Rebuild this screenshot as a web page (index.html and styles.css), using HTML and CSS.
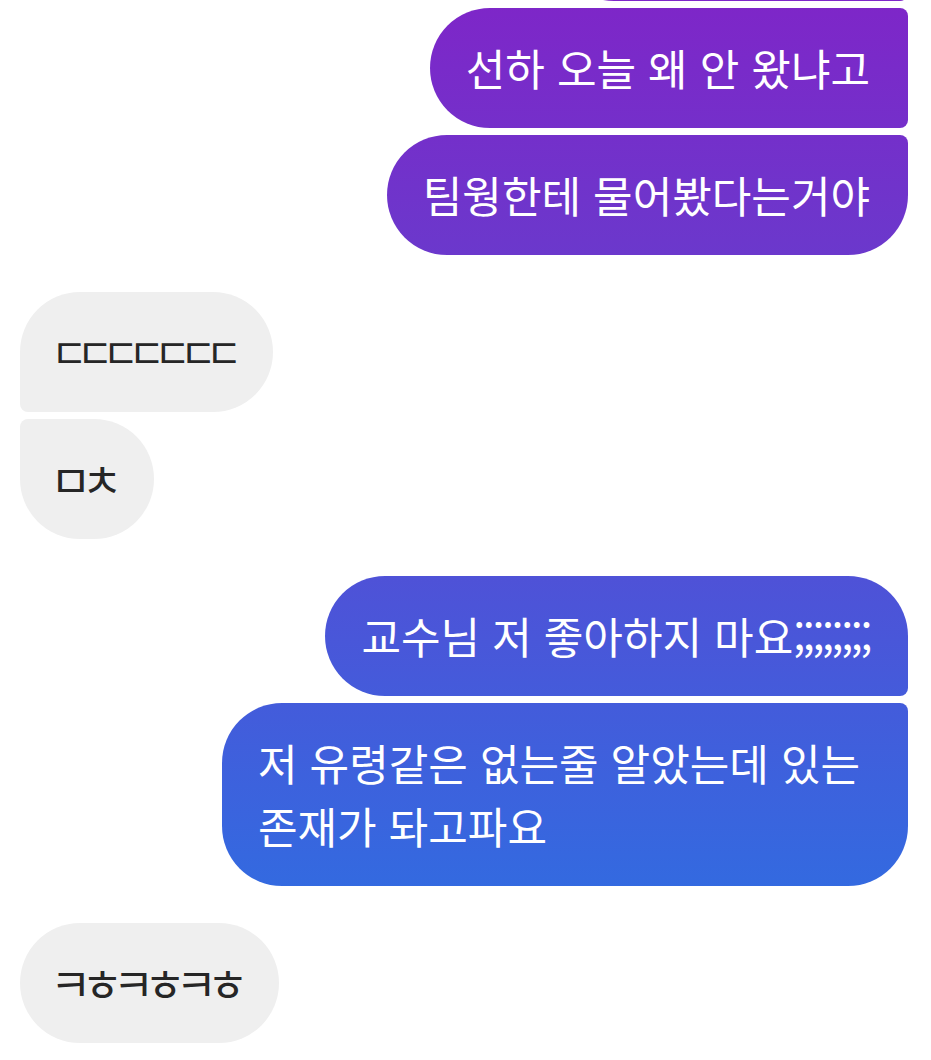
FILE: index.html
```html
<!DOCTYPE html>
<html lang="ko">
<head>
  <meta charset="UTF-8" />
  <meta name="viewport" content="width=device-width, initial-scale=1" />
  <title>Chat</title>
  <link rel="stylesheet" href="styles.css">
</head>
<body>
  <div class="thread">
    <div class="group sent">
      <div class="msg cut">&nbsp;</div>
      <div class="msg">선하 오늘 왜 안 왔냐고</div>
      <div class="msg">팀웡한테 물어봤다는거야</div>
    </div>

    <div class="group received">
      <div class="msg jamo">ㄷㄷㄷㄷㄷㄷㄷ</div>
      <div class="msg jamo wide">ㅁㅊ</div>
    </div>

    <div class="group sent">
      <div class="msg">교수님 저 좋아하지 마요<span class="semi">;;;;;;;;</span></div>
      <div class="msg">저 유령같은 없는줄 알았는데 있는 존재가 돠고파요</div>
    </div>

    <div class="group received">
      <div class="msg jamo wide">ㅋㅎㅋㅎㅋㅎ</div>
    </div>
  </div>
</body>
</html>
```

FILE: styles.css
```css
*, *::before, *::after { margin: 0; padding: 0; box-sizing: border-box; }

body {
  font-family: "Noto Sans CJK KR", "Noto Sans", sans-serif;
  background: #fff;
  height: 100vh;
  overflow: hidden;
}

.thread {
  display: flex;
  flex-direction: column;
  gap: 37px;
  padding: 0 23px 0 20px;
  margin-top: -119px;
}

.group {
  display: flex;
  flex-direction: column;
  gap: 7px;
}

.msg {
  font-size: 43px;
  line-height: 63px;
  padding: 28px 38px 29px 36px;
  border-radius: 60px;
  max-width: 686px;
}

.msg.cut { width: 354px; }

.semi { letter-spacing: -2.4px; }

.sent { align-items: flex-end; }

.sent .msg {
  color: #fff;
  background: linear-gradient(180deg, #7e26c8 0%, #6b38cc 24%, #4c54d8 57%, #336ae0 84%, #2c70e2 100%);
  background-attachment: fixed;
  border-top-right-radius: 8px;
  border-bottom-right-radius: 8px;
}

.sent .msg:first-child { border-top-right-radius: 60px; }
.sent .msg:last-child { border-bottom-right-radius: 60px; }

.received { align-items: flex-start; }

.received .msg {
  color: #262626;
  background: #efefef;
  border-top-left-radius: 8px;
  border-bottom-left-radius: 8px;
}

.received .msg:first-child { border-top-left-radius: 60px; }
.received .msg:last-child { border-bottom-left-radius: 60px; }

.msg.jamo {
  font-size: 40px;
  letter-spacing: -11px;
  padding-left: 31px;
  padding-right: 41px;
}

.msg.jamo.wide {
  font-size: 45px;
  letter-spacing: -10px;
  padding-left: 30px;
  padding-right: 41px;
}
```
